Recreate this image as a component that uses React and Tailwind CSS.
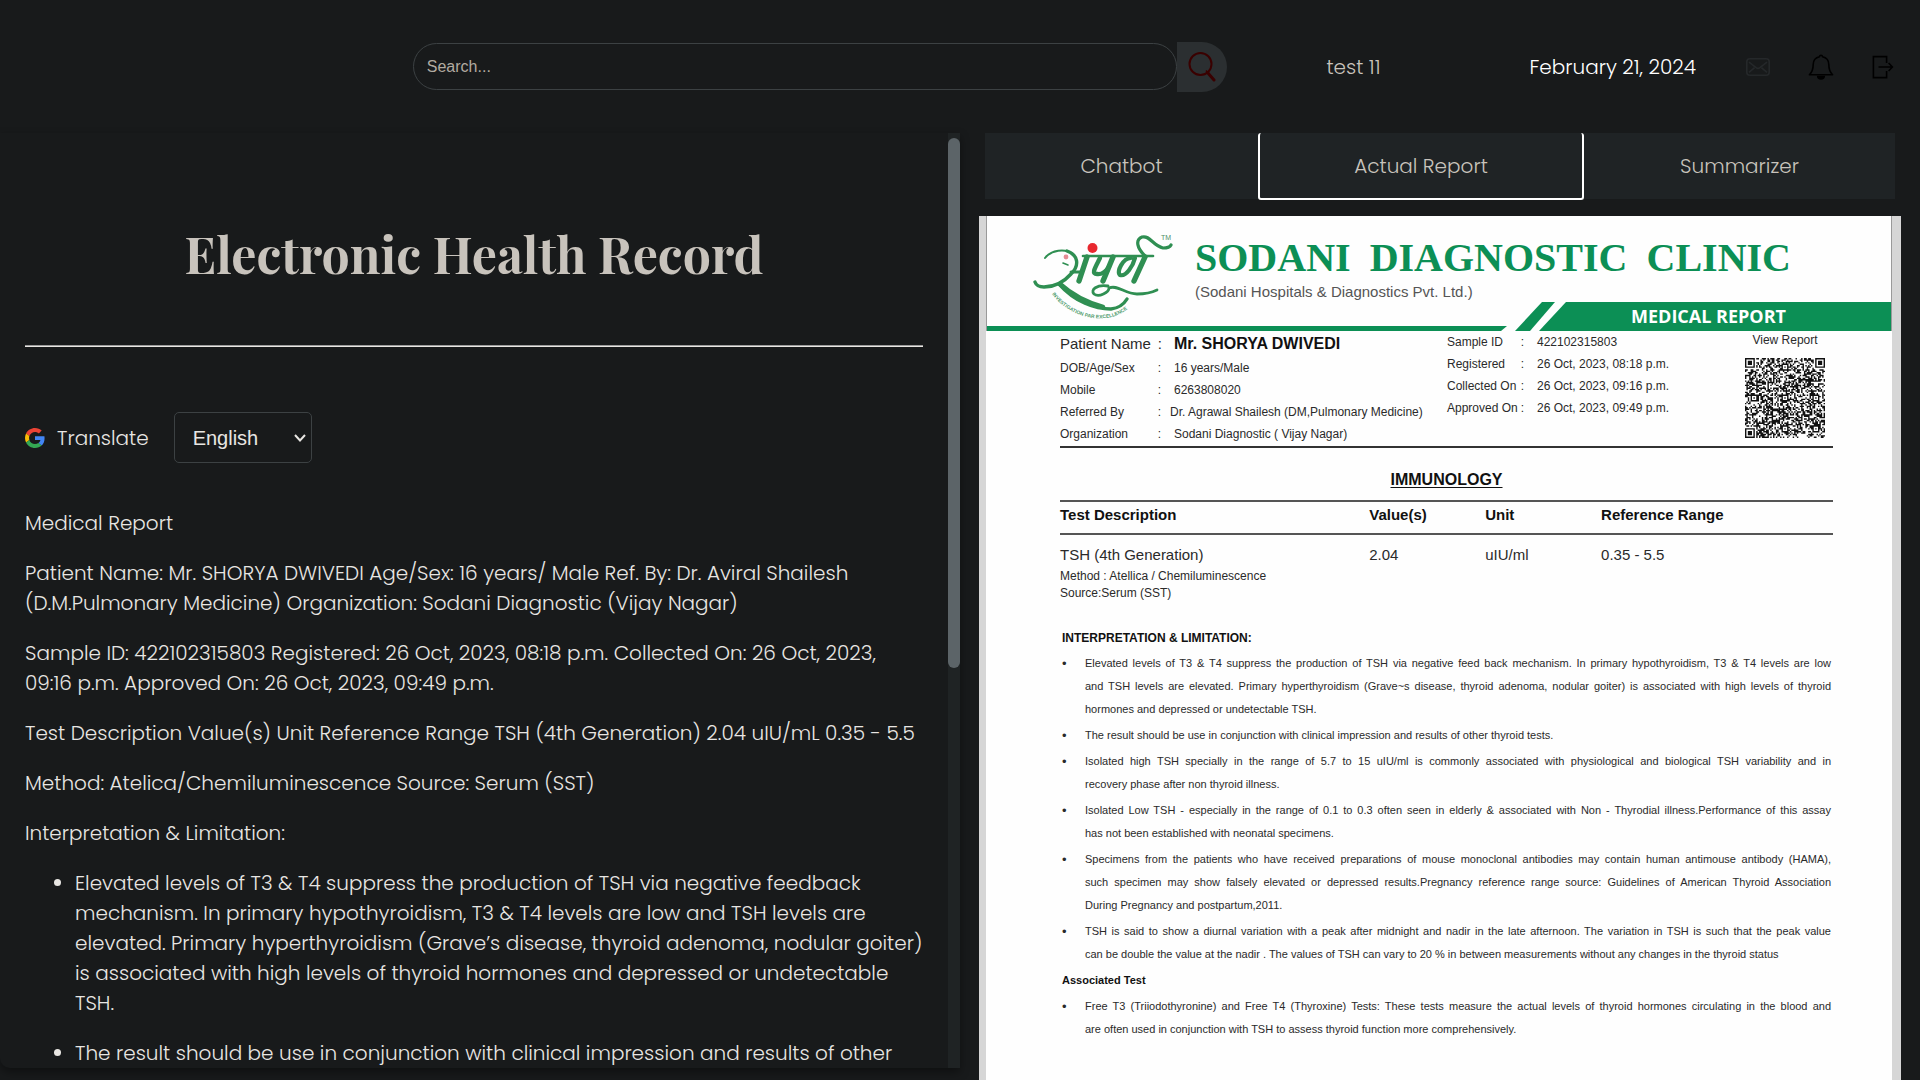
const INTERPRETATION = [
  [
    "Elevated levels of T3 & T4 suppress the production of TSH via negative feed back mechanism. In primary hypothyroidism, T3 & T4 levels are low",
    "and TSH levels are elevated. Primary hyperthyroidism (Grave~s disease, thyroid adenoma, nodular goiter) is associated with high levels of thyroid",
    "hormones and depressed or undetectable TSH.",
  ],
  ["The result should be use in conjunction with clinical impression and results of other thyroid tests."],
  [
    "Isolated high TSH specially in the range of 5.7 to 15 uIU/ml is commonly associated with physiological and biological TSH variability and in",
    "recovery phase after non thyroid illness.",
  ],
  [
    "Isolated Low TSH - especially in the range of 0.1 to 0.3 often seen in elderly & associated with Non - Thyrodial illness.Performance of this assay",
    "has not been established with neonatal specimens.",
  ],
  [
    "Specimens from the patients who have received preparations of mouse monoclonal antibodies may contain human antimouse antibody (HAMA),",
    "such specimen may show falsely elevated or depressed results.Pregnancy reference range source: Guidelines of American Thyroid Association",
    "During Pregnancy and postpartum,2011.",
  ],
  [
    "TSH is said to show a diurnal variation with a peak after midnight and nadir in the late afternoon. The variation in TSH is such that the peak value",
    "can be double the value at the nadir . The values of TSH can vary to 20 % in between measurements without any changes in the thyroid status",
  ],
];

const ASSOCIATED = [
  [
    "Free T3 (Triiodothyronine) and Free T4 (Thyroxine) Tests: These tests measure the actual levels of thyroid hormones circulating in the blood and",
    "are often used in conjunction with TSH to assess thyroid function more comprehensively.",
  ],
];

const RECORD = [
  ["Medical Report"],
  [
    "Patient Name: Mr. SHORYA DWIVEDI Age/Sex: 16 years/ Male Ref. By: Dr. Aviral Shailesh",
    "(D.M.Pulmonary Medicine) Organization: Sodani Diagnostic (Vijay Nagar)",
  ],
  [
    "Sample ID: 422102315803 Registered: 26 Oct, 2023, 08:18 p.m. Collected On: 26 Oct, 2023,",
    "09:16 p.m. Approved On: 26 Oct, 2023, 09:49 p.m.",
  ],
  ["Test Description Value(s) Unit Reference Range TSH (4th Generation) 2.04 uIU/mL 0.35 - 5.5"],
  ["Method: Atelica/Chemiluminescence Source: Serum (SST)"],
  ["Interpretation & Limitation:"],
];

const RECORD_LIST = [
  [
    "Elevated levels of T3 & T4 suppress the production of TSH via negative feedback",
    "mechanism. In primary hypothyroidism, T3 & T4 levels are low and TSH levels are",
    "elevated. Primary hyperthyroidism (Grave’s disease, thyroid adenoma, nodular goiter)",
    "is associated with high levels of thyroid hormones and depressed or undetectable",
    "TSH.",
  ],
  ["The result should be use in conjunction with clinical impression and results of other"],
];

function Lines({ lines }) {
  return lines.map((line) => (
    <span key={line} className="block whitespace-nowrap">
      {line}
    </span>
  ));
}

function SearchIcon() {
  return (
    <svg viewBox="0 0 28 30" className="h-[30px] w-7" fill="none" stroke="#3a0000" aria-hidden="true">
      <circle cx="12.5" cy="12" r="11" strokeWidth="2" />
      <path d="M19.5 20.5 L26 28" strokeWidth="3" strokeLinecap="round" />
      <path d="M18 18.5 L20.5 21.5" strokeWidth="1.6" />
    </svg>
  );
}

function MailIcon() {
  return (
    <svg viewBox="0 0 24 18" className="h-[18px] w-6" fill="none" stroke="#25282a" strokeWidth="1.6" aria-hidden="true">
      <rect x="0.8" y="0.8" width="22.4" height="16.4" rx="3" />
      <path d="M3 4.2 L10.4 9.8 Q12 11 13.6 9.8 L21 4.2" />
      <path d="M3 14.4 L8.6 9.6 M21 14.4 L15.4 9.6" />
    </svg>
  );
}

function BellIcon() {
  return (
    <svg viewBox="0 0 26 26" className="size-[26px]" fill="none" stroke="#000" strokeWidth="1.6" aria-hidden="true">
      <path
        d="M13 1.2 C12.1 1.2 11.6 1.9 11.5 2.7 C7.6 3.5 5.2 6.6 5.2 10.6 C5.2 15.2 4.2 18.2 1.4 20.8 H24.6 C21.8 18.2 20.8 15.2 20.8 10.6 C20.8 6.6 18.4 3.5 14.5 2.7 C14.4 1.9 13.9 1.2 13 1.2 Z"
        strokeLinejoin="round"
      />
      <path d="M8.9 21.8 H17.1 A4.1 4 0 0 1 8.9 21.8 Z" fill="#000" stroke="none" />
    </svg>
  );
}

function LogoutIcon() {
  return (
    <svg viewBox="0 0 22 24" className="h-6 w-[22px]" fill="none" stroke="#000" strokeWidth="1.6" aria-hidden="true">
      <path d="M14.6 8 V1.6 H1.4 V22.6 H14.6 V16" />
      <path d="M6.5 12 H20 M16.6 8 L20.4 12 L16.6 16" />
    </svg>
  );
}

function GoogleIcon() {
  return (
    <svg viewBox="0 0 48 48" className="size-5" aria-hidden="true">
      <path fill="#EA4335" d="M24 9.5c3.54 0 6.71 1.22 9.21 3.6l6.85-6.85C35.9 2.38 30.47 0 24 0 14.62 0 6.51 5.38 2.56 13.22l7.98 6.19C12.43 13.72 17.74 9.5 24 9.5z" />
      <path fill="#4285F4" d="M46.98 24.55c0-1.57-.15-3.09-.38-4.55H24v9.02h12.94c-.58 2.96-2.26 5.48-4.78 7.18l7.73 6c4.51-4.18 7.09-10.36 7.09-17.65z" />
      <path fill="#FBBC05" d="M10.53 28.59c-.48-1.45-.76-2.99-.76-4.59s.27-3.14.76-4.59l-7.98-6.19C.92 16.46 0 20.12 0 24c0 3.88.92 7.54 2.56 10.78l7.97-6.19z" />
      <path fill="#34A853" d="M24 48c6.48 0 11.93-2.13 15.89-5.81l-7.73-6c-2.15 1.45-4.92 2.3-8.16 2.3-6.26 0-11.57-4.22-13.47-9.91l-7.98 6.19C6.51 42.62 14.62 48 24 48z" />
    </svg>
  );
}

function ClinicLogo() {
  return (
    <svg viewBox="0 0 140 86" className="h-[86px] w-[140px] shrink-0" fill="none" stroke="#2f8f52" strokeLinecap="round" role="img" aria-label="Sampurna, investigation par excellence">
      <path d="M12 24 C18 16 32 14 40 20" strokeWidth="2" />
      <path d="M34 17 C45 21 47 31 38 40 C30 49 20 53 11 53 C6 53 3 51 2 48" strokeWidth="3.4" />
      <path d="M26 50 C42 68 62 75 78 75 C86 74 91 70 94 65" strokeWidth="3.4" />
      <path d="M27 50 C38 60 52 68 70 73" strokeWidth="4.6" />
      <path d="M30 29 L35 31" strokeWidth="1.6" />
      <path d="M50 22 H120" strokeWidth="2.6" />
      <path d="M54 23 L46 47" strokeWidth="5.4" />
      <path d="M38 38 H49" strokeWidth="3" />
      <path d="M67 24 C62 34 58 40 64 40 C68 41 73 37 76 33" strokeWidth="4.4" />
      <path d="M80 23 L70 47" strokeWidth="5.4" />
      <path d="M98 24 C90 24 83 38 87 41 C93 43 100 32 102 24" strokeWidth="4.2" />
      <path d="M112 23 L101 47" strokeWidth="5.4" />
      <path d="M112 22 C104 14 102 6 109 3 C117 1 120 12 130 14 C134 14 137 13 138 11" strokeWidth="3.2" />
      <path d="M75 52 C64 50 57 56 61 60 C66 64 76 58 76 54 C84 50 92 60 104 60 C112 60 120 58 124 56" strokeWidth="2.8" />
      <circle cx="59.5" cy="14" r="5" fill="#e8282f" stroke="none" />
      <circle cx="33" cy="23" r="2.4" fill="#e58b93" stroke="none" />
      <text x="128" y="6" fontSize="7" fill="#4f8f68" stroke="none" fontFamily="Liberation Sans">TM</text>
      <path id="tagline-curve" d="M19 60 C38 86 80 96 104 66" stroke="none" />
      <text fontSize="5" fontWeight="700" fill="#4c9a6b" stroke="none" fontFamily="Liberation Sans">
        <textPath href="#tagline-curve">INVESTIGATION PAR EXCELLENCE</textPath>
      </text>
    </svg>
  );
}

function buildQrPath() {
  const n = 57;
  const grid = Array.from({ length: n }, () => Array(n).fill(0));
  let seed = 20231026;
  for (let y = 0; y < n; y++)
    for (let x = 0; x < n; x++) {
      seed = (seed * 1103515245 + 12345) % 2147483648;
      grid[y][x] = seed / 2147483648 > 0.5 ? 1 : 0;
    }
  const square = (cx, cy, r, ring) => {
    for (let y = -r; y <= r; y++)
      for (let x = -r; x <= r; x++) {
        if (!grid[cy + y] || grid[cy + y][cx + x] === undefined) continue;
        grid[cy + y][cx + x] = ring(Math.max(Math.abs(x), Math.abs(y))) ? 1 : 0;
      }
  };
  [[3, 3], [53, 3], [3, 53]].forEach(([x, y]) => square(x, y, 4, (d) => d === 3 || d < 2));
  [[28, 6], [6, 28], [28, 28], [50, 28], [28, 50], [50, 50]].forEach(([x, y]) => square(x, y, 2, (d) => d !== 1));
  return grid.map((row, y) => row.map((v, x) => (v ? `M${x} ${y}h1v1h-1z` : "")).join("")).join("");
}
const QR_PATH = buildQrPath();

function Field({ label, value, labelClass }) {
  return (
    <div className="flex">
      <dt className={`flex shrink-0 justify-between whitespace-nowrap ${labelClass}`}>
        <span>{label}</span>
        <span>:</span>
      </dt>
      <dd className="whitespace-nowrap">{value}</dd>
    </div>
  );
}

function ReportList({ items }) {
  return (
    <ul className="flex flex-col gap-[3px]">
      {items.map((lines) => (
        <li key={lines[0]} className="flex">
          <span className="w-[23px] shrink-0 text-[13px]">•</span>
          <div className="min-w-0 flex-1">
            {lines.map((line, i) => (
              <span
                key={line}
                className={
                  i < lines.length - 1
                    ? "block whitespace-nowrap text-justify [text-align-last:justify]"
                    : "block whitespace-nowrap"
                }
              >
                {line}
              </span>
            ))}
          </div>
        </li>
      ))}
    </ul>
  );
}

function ClinicReport() {
  return (
    <article className="mx-[-6px] mt-[17px] min-h-0 flex-1 overflow-hidden bg-[#d6d6d6] pl-[7px] pr-[9px] font-['Liberation_Sans',Arial,sans-serif] text-[#2a2a2a]">
      <div className="h-full bg-[#fefefe]">
        <header className="border-x border-[#9a9a9a]">
          <div className="flex h-[86px] pl-[46px] pt-[18px]">
            <ClinicLogo />
            <div className="ml-[22px] flex-1 pr-[100px]">
              <h2 className="flex justify-between font-['Liberation_Serif',serif] text-[40px] font-bold leading-[48px] text-[#0c8f55]">
                <span>SODANI</span>
                <span>DIAGNOSTIC</span>
                <span>CLINIC</span>
              </h2>
              <p className="text-[15px] leading-5 text-[#555]">(Sodani Hospitals &amp; Diagnostics Pvt. Ltd.)</p>
            </div>
          </div>
          <div className="flex h-[29px] items-end text-[#0c8f55]">
            <div className="h-[5px] flex-1 bg-[#0c8f55] [clip-path:polygon(0_0,100%_0,calc(100%-6px)_100%,0_100%)]" />
            <div className="ml-2 h-full w-10 bg-[#0c8f55] [clip-path:polygon(27px_0,100%_0,15px_100%,0_100%)]" />
            <div className="-ml-4 h-full w-[352px] bg-[#0c8f55] pl-[92px] [clip-path:polygon(27px_0,100%_0,100%_100%,0_100%)]">
              <p className="font-['Open_Sans',sans-serif] text-lg font-bold leading-[29px] text-white">MEDICAL REPORT</p>
            </div>
          </div>
        </header>

        <div className="pl-[74px] pr-[59px]">
          <section className="flex h-[117px] border-b-2 border-[#333] text-[12px]">
            <dl className="w-[387px]">
              <div className="flex text-[15px] leading-[26px]">
                <dt className="flex w-[102px] justify-between">
                  <span>Patient Name</span>
                  <span>:</span>
                </dt>
                <dd className="ml-3 text-base font-bold leading-[26px] text-[#111]">Mr. SHORYA DWIVEDI</dd>
              </div>
              <div className="leading-[22px]">
                <Field labelClass="w-[101px] mr-[13px]" label="DOB/Age/Sex" value="16 years/Male" />
                <Field labelClass="w-[101px] mr-[13px]" label="Mobile" value="6263808020" />
                <Field labelClass="w-[101px] mr-[9px]" label="Referred By" value="Dr. Agrawal Shailesh (DM,Pulmonary Medicine)" />
                <Field labelClass="w-[101px] mr-[13px]" label="Organization" value="Sodani Diagnostic ( Vijay Nagar)" />
              </div>
            </dl>
            <dl className="flex-1 leading-[22px]">
              <Field labelClass="w-[77px] mr-[13px]" label="Sample ID" value="422102315803" />
              <Field labelClass="w-[77px] mr-[13px]" label="Registered" value="26 Oct, 2023, 08:18 p.m." />
              <Field labelClass="w-[77px] mr-[13px]" label="Collected On" value="26 Oct, 2023, 09:16 p.m." />
              <Field labelClass="w-[77px] mr-[13px]" label="Approved On" value="26 Oct, 2023, 09:49 p.m." />
            </dl>
            <div className="mr-2 flex w-20 flex-col items-center">
              <p className="whitespace-nowrap leading-[18px]">View Report</p>
              <svg viewBox="0 0 57 57" className="mt-[9px] size-20" fill="#111" role="img" aria-label="QR code">
                <path d={QR_PATH} />
              </svg>
            </div>
          </section>

          <h3 className="mt-[22px] text-center text-base font-bold leading-5 text-[#111] underline underline-offset-2">IMMUNOLOGY</h3>
          <table className="mt-[10px] w-full table-fixed text-left">
            <thead>
              <tr className="h-[33px] border-y-2 border-[#555] align-top text-[15px] leading-[26px] text-[#111]">
                <th className="w-[40%]">Test Description</th>
                <th className="w-[15%]">Value(s)</th>
                <th className="w-[15%]">Unit</th>
                <th className="w-[30%]">Reference Range</th>
              </tr>
            </thead>
            <tbody>
              <tr className="align-top text-[15px]">
                <td className="pt-[10px] leading-5">
                  TSH (4th Generation)
                  <span className="mt-[3px] block text-xs leading-[17px]">Method : Atellica / Chemiluminescence</span>
                  <span className="block text-xs leading-[17px]">Source:Serum (SST)</span>
                </td>
                <td className="pt-[10px] leading-5">2.04</td>
                <td className="pt-[10px] leading-5">uIU/ml</td>
                <td className="pt-[10px] leading-5">0.35 - 5.5</td>
              </tr>
            </tbody>
          </table>

          <section className="mt-[25px] px-0.5 text-[11px] leading-[23px]">
            <h4 className="mb-[2px] text-xs font-bold leading-[23px] text-[#111]">INTERPRETATION &amp; LIMITATION:</h4>
            <ReportList items={INTERPRETATION} />
            <h4 className="my-[3px] text-[11px] font-bold leading-[23px] text-[#111]">Associated Test</h4>
            <ReportList items={ASSOCIATED} />
          </section>
        </div>
      </div>
    </article>
  );
}

export default function App() {
  return (
    <div className="flex h-screen flex-col overflow-hidden bg-[#181a1b] font-['Poppins','Inter',sans-serif] text-[#e8e6e3]">
      <header className="flex h-[133px] shrink-0 items-center pl-[21.5%] pr-[26px] text-[20px]">
        <form className="flex w-[55%] items-center" role="search">
          <input
            type="text"
            aria-label="Search"
            placeholder="Search..."
            className="h-[47px] min-w-0 flex-1 rounded-full border border-[#3c4143] bg-transparent px-[13px] font-['Liberation_Sans',Arial,sans-serif] text-base placeholder:text-[#b2aba1] focus:outline-none"
          />
          <button type="button" aria-label="Search" className="flex size-[50px] items-center justify-center rounded-r-full bg-[#2b2f31]">
            <SearchIcon />
          </button>
        </form>
        <span className="ml-[99px] font-light text-[#c8c3bc]">test 11</span>
        <time className="ml-auto mr-[50px] font-light text-white">February 21, 2024</time>
        <div className="flex items-center">
          <button type="button" aria-label="Messages"><MailIcon /></button>
          <button type="button" aria-label="Notifications" className="ml-[38px]"><BellIcon /></button>
          <button type="button" aria-label="Log out" className="ml-[38px]"><LogoutIcon /></button>
        </div>
      </header>

      <main className="flex min-h-0 flex-1">
        <section className="mb-3 flex w-1/2 overflow-hidden rounded-bl-[10px] shadow-[0_4px_10px_rgba(0,0,0,0.4)]">
          <div className="min-w-0 flex-1 overflow-hidden px-[25px] pt-[85px]">
            <h1 className="text-center font-['Playfair_Display','Liberation_Serif',serif] text-[50px] font-bold leading-[72px] text-[#c8c3bc]">
              Electronic Health Record
            </h1>
            <hr className="mt-[55px] border-b border-t border-b-[#e8e6e3] border-t-[#9a9a9a]" />
            <div className="mt-[65px] flex items-center text-[20px] font-light">
              <GoogleIcon />
              <label htmlFor="language" className="ml-3">Translate</label>
              <div className="ml-[25px] grid items-center">
                <select
                  id="language"
                  defaultValue="English"
                  className="col-start-1 row-start-1 h-[51px] w-[138px] appearance-none rounded-[5px] border border-[#3c4143] bg-[#181a1b] pl-[18px] font-['Liberation_Sans',Arial,sans-serif] text-xl font-normal"
                >
                  <option>English</option>
                  <option>Hindi</option>
                </select>
                <svg viewBox="0 0 12 8" className="pointer-events-none col-start-1 row-start-1 mr-[6px] h-2 w-3 justify-self-end" fill="none" stroke="#e8e6e3" strokeWidth="2" aria-hidden="true">
                  <path d="M1 1 L6 6.5 L11 1" />
                </svg>
              </div>
            </div>
            <div className="mt-[45px] flex flex-col gap-5 text-[20px] font-light leading-[30px]">
              {RECORD.map((lines) => (
                <p key={lines[0]}>
                  <Lines lines={lines} />
                </p>
              ))}
              <ul className="flex list-disc flex-col gap-5 pl-[50px]">
                {RECORD_LIST.map((lines) => (
                  <li key={lines[0]}>
                    <Lines lines={lines} />
                  </li>
                ))}
              </ul>
            </div>
          </div>
          <div className="w-3 shrink-0 bg-[#1f2324] pt-[5px]">
            <div className="h-[57%] rounded-md bg-[#5c6468]" />
          </div>
        </section>

        <section className="ml-[25px] mr-[25px] flex min-w-0 flex-1 flex-col">
          <div role="tablist" className="grid h-[66px] shrink-0 grid-cols-[273fr_326fr_311fr] bg-[#1f2325] text-[20px] font-light text-[#c8c3bc]">
            <button type="button" role="tab" aria-selected="false">Chatbot</button>
            <button type="button" role="tab" aria-selected="true" className="-mb-px rounded-[3px] border-2 border-t-0 border-white pt-px">Actual Report</button>
            <button type="button" role="tab" aria-selected="false">Summarizer</button>
          </div>
          <ClinicReport />
        </section>
      </main>
    </div>
  );
}
